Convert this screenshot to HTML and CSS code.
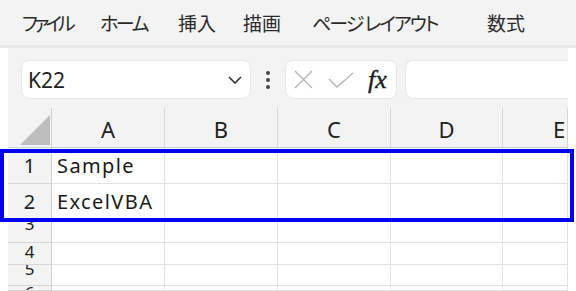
FILE: index.html
```html
<html>

<head>
    <title>Excel</title>
    <link rel="stylesheet" href="styles.css">
</head>

<body>
    <div class="ribbon">
        <span class="tab tab-file">ファイル</span>
        <span class="tab tab-home">ホーム</span>
        <span class="tab tab-insert">挿入</span>
        <span class="tab tab-draw">描画</span>
        <span class="tab tab-layout">ページ レイアウト</span>
        <span class="tab tab-formula">数式</span>
    </div>

    <div class="app">
        <div class="formula-row">
            <div class="name-box">
                <span class="name-text">K22</span>
                <svg class="chevron" width="14" height="8" viewBox="0 0 14 8">
                    <path d="M1 1 L7 7 L13 1" fill="none" stroke="#333" stroke-width="1.6" />
                </svg>
            </div>
            <div class="dots">
                <span></span><span></span><span></span>
            </div>
            <div class="fx-box">
                <svg width="19" height="19" viewBox="0 0 19 19">
                    <path d="M1 1 L18 18 M18 1 L1 18" stroke="#b4b4b4" stroke-width="1.4" fill="none" />
                </svg>
                <svg width="26" height="16" viewBox="0 0 26 16">
                    <path d="M1 7 L9 15 L25 1" stroke="#b4b4b4" stroke-width="1.4" fill="none" />
                </svg>
                <span class="fx">fx</span>
            </div>
            <div class="formula-input"></div>
        </div>

        <div class="sheet">
            <div class="corner"><div class="triangle"></div></div>
            <div class="col-head">A</div>
            <div class="col-head">B</div>
            <div class="col-head">C</div>
            <div class="col-head">D</div>
            <div class="col-head last">E</div>

            <div class="row-head tall">1</div>
            <div class="cell">Sample</div>
            <div class="cell"></div>
            <div class="cell"></div>
            <div class="cell"></div>
            <div class="cell"></div>

            <div class="row-head tall">2</div>
            <div class="cell">ExcelVBA</div>
            <div class="cell"></div>
            <div class="cell"></div>
            <div class="cell"></div>
            <div class="cell"></div>

            <div class="row-head short r3"><span>3</span></div>
            <div class="cell"></div>
            <div class="cell"></div>
            <div class="cell"></div>
            <div class="cell"></div>
            <div class="cell"></div>

            <div class="row-head short r4"><span>4</span></div>
            <div class="cell"></div>
            <div class="cell"></div>
            <div class="cell"></div>
            <div class="cell"></div>
            <div class="cell"></div>

            <div class="row-head short r5"><span>5</span></div>
            <div class="cell"></div>
            <div class="cell"></div>
            <div class="cell"></div>
            <div class="cell"></div>
            <div class="cell"></div>

            <div class="row-head short r6"><span>6</span></div>
            <div class="cell"></div>
            <div class="cell"></div>
            <div class="cell"></div>
            <div class="cell"></div>
            <div class="cell"></div>

            <!-- 選択範囲の枠 -->
            <div class="highlight"></div>
        </div>
    </div>
</body>

</html>
```

FILE: styles.css
```css
body {
    margin: 0;
    padding: 0;
    width: 576px;
    height: 291px;
    overflow: hidden;
    background-color: #fff;
    font-family: "Noto Sans CJK JP", "Noto Sans", sans-serif;
    color: #222;
}

.ribbon {
    height: 45px;
    background-color: #f3f3f3;
    border-bottom: 3px solid #e9e9e9;
    display: flex;
    align-items: center;
    font-size: 19px;
    font-feature-settings: "palt";
    color: #2b2b2b;
    white-space: nowrap;
}

.tab {
    display: inline-block;
    flex-shrink: 0;
}

.tab-file { margin-left: 22px; width: 51px; letter-spacing: -4px; }
.tab-home { margin-left: 27px; width: 47px; letter-spacing: -2.5px; }
.tab-insert { margin-left: 31px; width: 38px; }
.tab-draw { margin-left: 27px; width: 39px; }
.tab-layout { margin-left: 30px; width: 125px; letter-spacing: -2px; }
.tab-formula { margin-left: 50px; width: 39px; }

.app {
    margin-left: 8px;
    width: 560px;
    background-color: #f3f3f3;
}

.formula-row {
    height: 60px;
    display: flex;
    align-items: flex-start;
    padding-top: 12px;
    box-sizing: border-box;
}

.name-box {
    margin-left: 13px;
    width: 230px;
    height: 39px;
    background-color: #fff;
    border: 1px solid #e6e6e6;
    border-radius: 8px;
    display: flex;
    align-items: center;
    justify-content: space-between;
    padding: 0 8px 0 6px;
    box-sizing: border-box;
}

.name-text {
    font-family: "Noto Sans", sans-serif;
    font-size: 21px;
    color: #222;
}

.dots {
    width: 34px;
    height: 39px;
    display: flex;
    flex-direction: column;
    align-items: center;
    justify-content: center;
    gap: 3px;
}

.dots span {
    width: 4px;
    height: 4px;
    border-radius: 2px;
    background-color: #444;
}

.fx-box {
    width: 112px;
    height: 39px;
    background-color: #fff;
    border: 1px solid #e6e6e6;
    border-radius: 8px;
    box-sizing: border-box;
    display: flex;
    align-items: center;
    padding-left: 8px;
    gap: 15px;
}

.fx {
    font-family: "Liberation Serif", serif;
    font-style: italic;
    font-size: 26px;
    line-height: 1;
    color: #1e1e1e;
    margin-left: -1px;
    -webkit-text-stroke: 0.4px #1e1e1e;
}

.formula-input {
    margin-left: 8px;
    flex: 1;
    height: 39px;
    background-color: #fff;
    border: 1px solid #e6e6e6;
    border-right: none;
    border-radius: 8px 0 0 8px;
    box-sizing: border-box;
}

.sheet {
    position: relative;
    display: grid;
    grid-template-columns: 44px 113px 113px 113px 112px 65px;
    grid-template-rows: 40px 36px 36px 23px 22px 21px 5px;
}

.corner {
    border-right: 1px solid #d0d0d0;
    border-bottom: 1px solid #d0d0d0;
    position: relative;
}

.triangle {
    position: absolute;
    left: 12px;
    bottom: 2px;
    width: 0;
    height: 0;
    border-left: 30px solid transparent;
    border-bottom: 30px solid #bdbdbd;
}

.col-head {
    border-right: 1px solid #d6d6d6;
    border-bottom: 1px solid #d0d0d0;
    display: flex;
    align-items: center;
    justify-content: center;
    font-family: "Noto Sans", sans-serif;
    font-size: 22px;
    color: #222;
    padding-top: 3px;
    box-sizing: border-box;
}

.col-head.last {
    justify-content: flex-start;
    padding-left: 50px;
}

.row-head {
    border-right: 1px solid #d0d0d0;
    border-bottom: 1px solid #d6d6d6;
    display: flex;
    justify-content: center;
    font-family: "Noto Sans", sans-serif;
    font-size: 20px;
    color: #222;
    overflow: hidden;
    box-sizing: border-box;
}

.row-head.tall {
    align-items: center;
}

/* 低い行では数字が上で切れる */
.row-head.short {
    align-items: flex-start;
    font-size: 17px;
    line-height: 1;
}

.row-head.r3 span { margin-top: -5px; }
.row-head.r4 span { margin-top: 0; }
.row-head.r5 span { margin-top: -5px; }
.row-head.r6 span { margin-top: -2px; }

.cell {
    background-color: #fff;
    border-right: 1px solid #e2e2e2;
    border-bottom: 1px solid #e2e2e2;
    display: flex;
    align-items: center;
    padding-left: 5px;
    font-family: "Noto Sans", sans-serif;
    font-size: 20px;
    letter-spacing: 1.4px;
    color: #1a1a1a;
    box-sizing: border-box;
    white-space: nowrap;
}

.highlight {
    position: absolute;
    left: -8px;
    top: 41px;
    width: 574px;
    height: 73px;
    border: 4px solid #0000f0;
    box-sizing: border-box;
}
```
